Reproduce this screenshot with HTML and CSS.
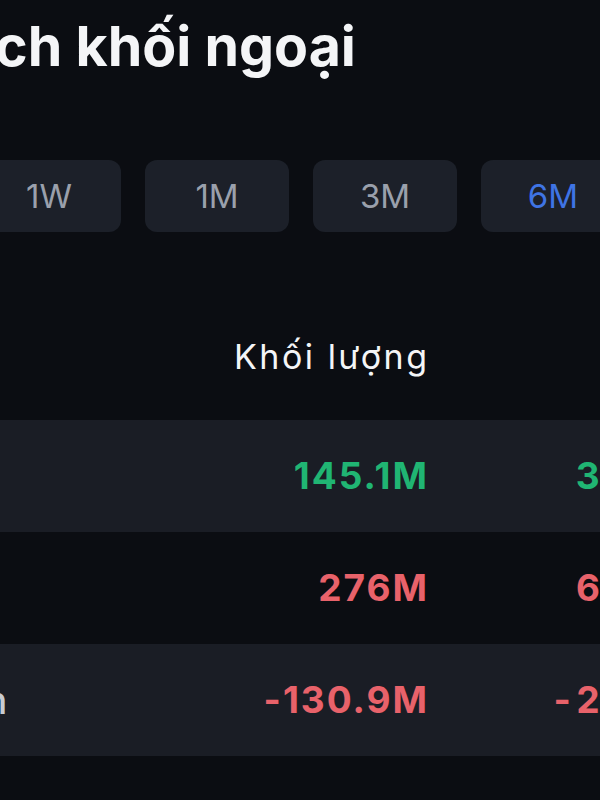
FILE: index.html
```html
<!DOCTYPE html>
<html lang="vi">
<head>
    <meta charset="UTF-8">
    <meta name="viewport" content="width=device-width, initial-scale=1.0">
    <title>Giao dịch khối ngoại</title>
    <link rel="stylesheet" href="styles.css">
</head>
<body>
    <div class="screen">
        <h1 class="page-title">Giao dịch khối ngoại</h1>

        <div class="range-tabs">
            <button class="range-tab">1D</button>
            <button class="range-tab">1W</button>
            <button class="range-tab">1M</button>
            <button class="range-tab">3M</button>
            <button class="range-tab active">6M</button>
            <button class="range-tab">1Y</button>
        </div>

        <div class="trade-table">
            <div class="trade-head">
                <div class="col-label"></div>
                <div class="col-num">Khối lượng</div>
                <div class="col-num">Giá trị</div>
            </div>
            <div class="trade-row shaded">
                <div class="col-label">Mua</div>
                <div class="col-num up">145.1M</div>
                <div class="col-num col-value up">3,921.5B</div>
            </div>
            <div class="trade-row">
                <div class="col-label">Bán</div>
                <div class="col-num down">276M</div>
                <div class="col-num col-value down">6,768.6B</div>
            </div>
            <div class="trade-row shaded">
                <div class="col-label">Mua - Bán</div>
                <div class="col-num down">-130.9M</div>
                <div class="col-num col-value down">-2,847.1B</div>
            </div>
        </div>
    </div>
</body>
</html>
```

FILE: styles.css
```css
body {
    margin: 0;
    background-color: #0b0d12;
    color: #f4f5f7;
    font-family: Inter, "Noto Sans", sans-serif;
    overflow: hidden;
}
.screen {
    margin-left: -215px;
    width: 1000px;
    padding: 0 24px;
}
.page-title {
    margin: 0;
    padding-top: 13px;
    font-size: 55.5px;
    font-weight: 700;
    line-height: 1.2;
    white-space: nowrap;
}
.range-tabs {
    display: flex;
    gap: 24px;
    margin-top: 80px;
}
.range-tab {
    flex: none;
    width: 144px;
    height: 72px;
    border: none;
    border-radius: 12px;
    background-color: #1c2029;
    color: #9aa0ac;
    font-family: Inter, "Noto Sans", sans-serif;
    font-size: 33px;
    font-weight: 400;
}
.range-tab.active {
    color: #3f74e4;
}
.trade-head,
.trade-row {
    display: grid;
    grid-template-columns: 398px 220px 327px;
    align-items: center;
}
.trade-head {
    padding: 106px 0 44px;
    font-size: 34px;
    line-height: 38px;
    letter-spacing: 2.5px;
}
.trade-head .col-num {
    margin-right: -2.5px;
}
.trade-row {
    height: 112px;
    font-size: 37px;
    font-weight: 700;
    letter-spacing: 2px;
}
.trade-row .col-num {
    margin-right: -2px;
}
.trade-row .col-value {
    font-variant-numeric: tabular-nums;
}
.trade-row.shaded {
    background-color: #1a1d25;
}
.col-label {
    font-size: 38px;
    font-weight: 500;
    letter-spacing: 1.5px;
    color: #c8cbd2;
}
.col-num {
    text-align: right;
    white-space: nowrap;
}
.up {
    color: #20b573;
}
.down {
    color: #e8626a;
}
```
